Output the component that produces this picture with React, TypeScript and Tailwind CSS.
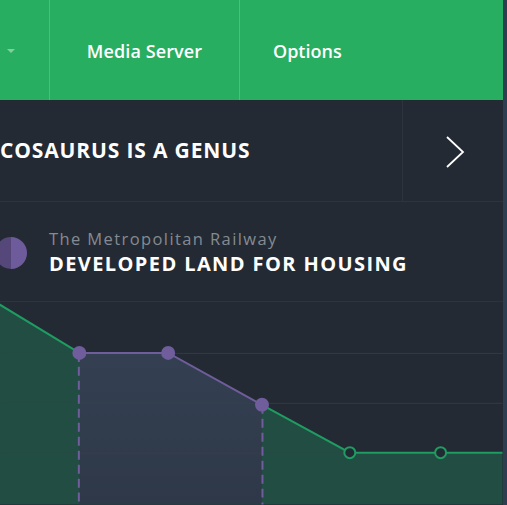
const font = { fontFamily: '"Open Sans", "DejaVu Sans", sans-serif' };

const Chart = () => (
  <svg width="503" height="203" viewBox="0 0 503 203" className="block">
    <defs>
      <linearGradient id="pfill" x1="0" y1="0" x2="0" y2="1">
        <stop offset="0" stopColor="#344052" />
        <stop offset="1" stopColor="#2e3848" />
      </linearGradient>
    </defs>
    <polygon
      points="-10,-3 79,51 168,51 262,103 350,151 441,151 503,151 503,203 -10,203"
      fill="#214d42"
    />
    <polygon points="79,51 168,51 262,103 262,203 79,203" fill="url(#pfill)" />
    {[51, 101, 151].map((y) => (
      <line key={y} x1="0" x2="503" y1={y + 0.5} y2={y + 0.5} stroke="#3a424d" strokeOpacity="0.7" />
    ))}
    <polyline points="-10,-3 79,51" fill="none" stroke="#1f9c62" strokeWidth="2" />
    <polyline points="262,103 350,151 503,151" fill="none" stroke="#1f9c62" strokeWidth="2" />
    <polyline points="79,51 168,51 262,103" fill="none" stroke="#6f5d9c" strokeWidth="2" />
    <line x1="78.5" x2="78.5" y1="51" y2="203" stroke="#6f5d9c" strokeWidth="2" strokeDasharray="9 5" />
    <line x1="262.5" x2="262.5" y1="103" y2="203" stroke="#6f5d9c" strokeWidth="2" strokeDasharray="9 5" />
    <circle cx="79" cy="51" r="7" fill="#6f5d9c" />
    <circle cx="168" cy="51" r="7" fill="#6f5d9c" />
    <circle cx="262" cy="103" r="7" fill="#6f5d9c" />
    <circle cx="350" cy="151" r="5.5" fill="#232a33" stroke="#1f9c62" strokeWidth="2" />
    <circle cx="441" cy="151" r="5.5" fill="#232a33" stroke="#1f9c62" strokeWidth="2" />
  </svg>
);

export default function App() {
  return (
    <div className="flex w-[507px] h-[505px] overflow-hidden bg-[#232a33]" style={font}>
      <div className="flex flex-col w-[503px]">
        <nav className="flex h-[100px] bg-[#28ae60] text-white">
          <div className="flex w-[50px] items-center pl-[7px] pt-[3px] border-r border-[#4cbd7a]">
            <svg width="8" height="5" viewBox="0 0 8 5">
              <polygon points="0,0 8,0 4,4" fill="#7fcf9f" />
            </svg>
          </div>
          <div className="flex w-[190px] items-center justify-center pt-[3px] border-r border-[#4cbd7a] text-[18px] font-semibold tracking-[0.1px]">
            Media Server
          </div>
          <div className="flex items-center pl-[33px] pt-[3px] text-[18px] font-semibold">
            Options
          </div>
        </nav>
        <div className="flex h-[102px] border-b border-[#2d343e]">
          <div className="flex flex-1 items-center pt-[2px] border-r border-[#2d343e]">
            <h1 className="text-[21px] font-bold uppercase tracking-[0.85px] text-white">
              Cosaurus is a genus
            </h1>
          </div>
          <div className="flex w-[100px] items-center justify-center pl-[4px] pt-[4px]">
            <svg width="22" height="34" viewBox="0 0 22 34">
              <polyline points="3,2 19,17 3,32" fill="none" stroke="#fff" strokeWidth="1.8" />
            </svg>
          </div>
        </div>
        <div className="flex h-[101px] items-start border-b border-[#2d343e]">
          <div className="w-[49px] shrink-0 relative h-full">
            <svg width="32" height="32" viewBox="0 0 32 32" className="absolute left-[-5px] top-[35px]">
              <path d="M16 0 A16 16 0 0 0 16 32 Z" fill="#56477b" />
              <path d="M16 0 A16 16 0 0 1 16 32 Z" fill="#6e5b9b" />
            </svg>
          </div>
          <div className="flex flex-col pt-[25px]">
            <span className="text-[16.5px] leading-[23px] tracking-[1.4px] text-[#858a92]">
              The Metropolitan Railway
            </span>
            <span className="text-[20px] leading-[27px] font-bold uppercase tracking-[1.4px] text-white">
              Developed land for housing
            </span>
          </div>
        </div>
        <Chart />
      </div>
      <div className="w-[4px] bg-[#2c3e50]" />
    </div>
  );
}
